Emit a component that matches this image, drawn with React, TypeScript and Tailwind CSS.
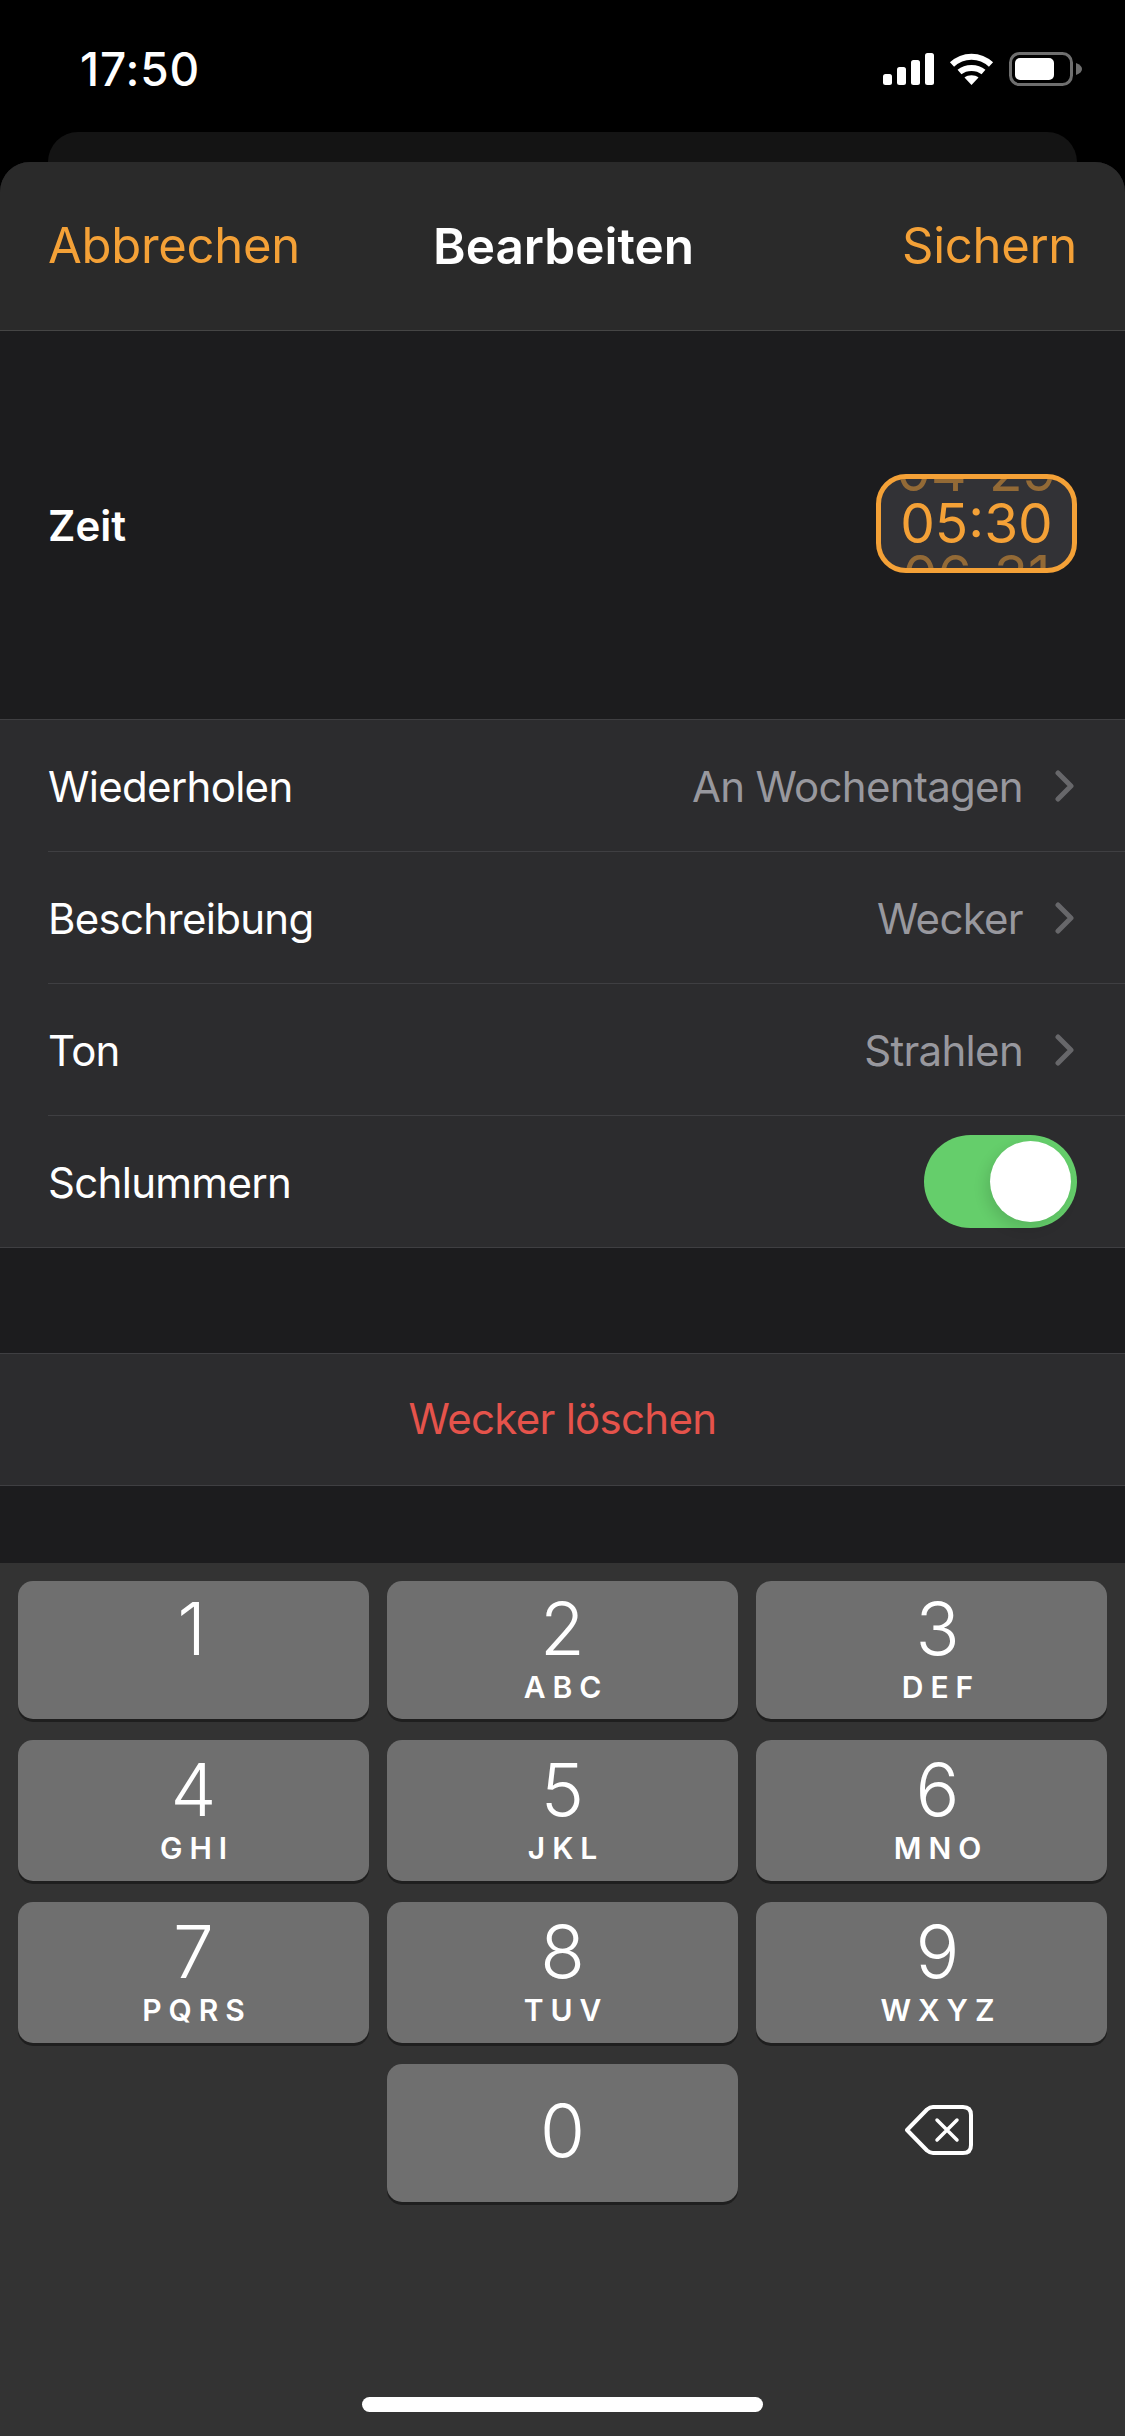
const font = { fontFamily: 'Inter, "Liberation Sans", sans-serif' };

function Chevron() {
  return (
    <svg width="20" height="32" viewBox="0 0 20 32" className="shrink-0 ml-[32px] mr-[2px]">
      <path d="M3 3 L16 16 L3 29" fill="none" stroke="#67676a" strokeWidth="5" strokeLinecap="round" strokeLinejoin="round" />
    </svg>
  );
}

function Row({ label, value }: { label: string; value: string }) {
  return (
    <div className="h-[132px] pl-[48px] bg-[#2c2c2e]">
      <div className="h-full flex items-center pr-[48px] border-b border-[#3f3f42]">
        <span className="flex-1 text-[42px] text-white tracking-[-0.7px] pt-[2px]">{label}</span>
        <span className="text-[42px] text-[#98989e] tracking-[-0.7px] pt-[2px]">{value}</span>
        <Chevron />
      </div>
    </div>
  );
}

function Key({ n, letters, cls }: { n: string; letters?: string; cls: string }) {
  return (
    <div className={`${cls} rounded-[15px] bg-[#6f6f6f] shadow-[0_3px_0_#1f1f1f] flex flex-col items-center text-white`}>
      <span className="text-[73px] leading-[78px] font-light">{n}</span>
      {letters && <span className="text-[30px] leading-[34px] font-semibold tracking-[7px] pl-[7px] mt-[2px]">{letters}</span>}
    </div>
  );
}

export default function App() {
  return (
    <div className="w-[1125px] h-[2436px] bg-black flex flex-col overflow-hidden" style={font}>
      <div className="h-[132px] shrink-0 flex items-start justify-between pl-[80px] pr-[43px] pt-[44px]">
        <span className="text-[46px] leading-[50px] font-medium text-white tracking-[0.8px]">17:50</span>
        <div className="flex items-center gap-[15px] mt-[8px]">
          <svg width="51" height="32" viewBox="0 0 51 32" fill="#fff">
            <rect x="0" y="21" width="9" height="11" rx="2.5" />
            <rect x="14" y="14" width="9" height="18" rx="2.5" />
            <rect x="28" y="7" width="9" height="25" rx="2.5" />
            <rect x="42" y="0" width="9" height="32" rx="2.5" />
          </svg>
          <svg width="45" height="32" viewBox="0 0 45 32" fill="none" stroke="#fff" strokeWidth="6">
            <path d="M3 11.5 C14 1 31 1 42 11.5" />
            <path d="M10.5 19 C17 13.5 28 13.5 34.5 19" />
            <path d="M22.5 32 L15.5 24.5 C19 21.5 26 21.5 29.5 24.5 Z" fill="#fff" stroke="none" />
          </svg>
          <svg width="73" height="34" viewBox="0 0 73 34" fill="none">
            <rect x="1.5" y="1.5" width="61" height="31" rx="9" stroke="#6f6f6f" strokeWidth="3" />
            <rect x="6" y="6" width="39" height="22" rx="5" fill="#fff" />
            <path d="M67 11 C71 12.5 73 14.5 73 17 C73 19.5 71 21.5 67 23 Z" fill="#6f6f6f" />
          </svg>
        </div>
      </div>
      <div className="h-[30px] shrink-0 mx-[48px] bg-[#141414] rounded-t-[30px]" />
      <div className="flex-1 flex flex-col bg-[#1c1c1e] rounded-t-[30px] overflow-hidden">
        <div className="h-[169px] shrink-0 bg-[#2a2a2a] border-b border-[#454545] flex items-center justify-between px-[48px]">
          <span className="w-[300px] text-[49px] text-[#f4a137] tracking-[-0.3px]">Abbrechen</span>
          <span className="text-[49.5px] font-semibold text-white pl-[2px]">Bearbeiten</span>
          <span className="w-[300px] text-right text-[49px] text-[#f4a137] tracking-[-0.3px]">Sichern</span>
        </div>
        <div className="h-[389px] shrink-0 border-b border-[#3f3f42] flex items-center justify-between pl-[48px] pr-[48px] pb-[4px]">
          <span className="text-[42px] font-semibold text-white mt-[4px]">Zeit</span>
          <div className="w-[201px] h-[99px] rounded-[30px] border-[5px] border-[#f4a137] bg-[#323236] overflow-hidden flex flex-col items-center justify-center text-[#f4a137] text-[55px] leading-[52px] font-light">
            <span className="shrink-0 h-[52px] opacity-50 font-normal whitespace-pre [word-spacing:7px]">04 29</span>
            <span className="shrink-0 h-[52px] font-normal">05:30</span>
            <span className="shrink-0 h-[52px] opacity-50 font-normal whitespace-pre [word-spacing:7px]">06 31</span>
          </div>
        </div>
        <Row label="Wiederholen" value="An Wochentagen" />
        <Row label="Beschreibung" value="Wecker" />
        <Row label="Ton" value="Strahlen" />
        <div className="h-[132px] shrink-0 bg-[#2c2c2e] border-b border-[#3f3f42] flex items-center justify-between pl-[48px] pr-[48px]">
          <span className="text-[42px] text-white tracking-[-0.7px] pt-[2px]">Schlummern</span>
          <div className="w-[153px] h-[93px] rounded-full bg-[#65ce6b] flex items-center justify-end pr-[6px]">
            <div className="w-[81px] h-[81px] rounded-full bg-white shadow-[-4px_6px_14px_rgba(0,0,0,0.12)]" />
          </div>
        </div>
        <div className="h-[105px] shrink-0" />
        <div className="h-[133px] shrink-0 bg-[#2c2c2e] border-y border-[#3f3f42] flex items-center justify-center text-[42px] text-[#e5534b] tracking-[-0.7px] pb-[2px]">
          Wecker löschen
        </div>
        <div className="h-[77px] shrink-0" />
        <div className="flex-1 bg-[#333333] px-[18px] pt-[18px] flex flex-col">
          <div className="grid grid-cols-3 gap-x-[18px] gap-y-[21px]">
            <Key n="1" cls="h-[138px] pt-[9px] pr-[4px]" />
            <Key n="2" letters="ABC" cls="h-[138px] pt-[9px]" />
            <Key n="3" letters="DEF" cls="h-[138px] pt-[9px] pl-[12px]" />
            <Key n="4" letters="GHI" cls="h-[141px] pt-[11px]" />
            <Key n="5" letters="JKL" cls="h-[141px] pt-[11px]" />
            <Key n="6" letters="MNO" cls="h-[141px] pt-[11px] pl-[12px]" />
            <Key n="7" letters="PQRS" cls="h-[141px] pt-[11px]" />
            <Key n="8" letters="TUV" cls="h-[141px] pt-[11px]" />
            <Key n="9" letters="WXYZ" cls="h-[141px] pt-[11px] pl-[12px]" />
            <div />
            <Key n="0" cls="h-[138px] justify-center pb-[4px]" />
            <div className="flex items-center justify-center pb-[6px] pl-[15px]">
              <svg width="68" height="50" viewBox="0 0 68 50" fill="none" stroke="#fff" strokeLinecap="round" strokeLinejoin="round">
                <path d="M2 25 L22 4.5 Q25 2 28 2 L58 2 Q66 2 66 10 L66 40 Q66 48 58 48 L28 48 Q25 48 22 45.5 Z" strokeWidth="4" />
                <path d="M32 15 L52 35 M52 15 L32 35" strokeWidth="3.5" />
              </svg>
            </div>
          </div>
          <div className="mt-auto mb-[24px] w-[401px] h-[15px] rounded-full bg-white self-center" />
        </div>
      </div>
    </div>
  );
}
